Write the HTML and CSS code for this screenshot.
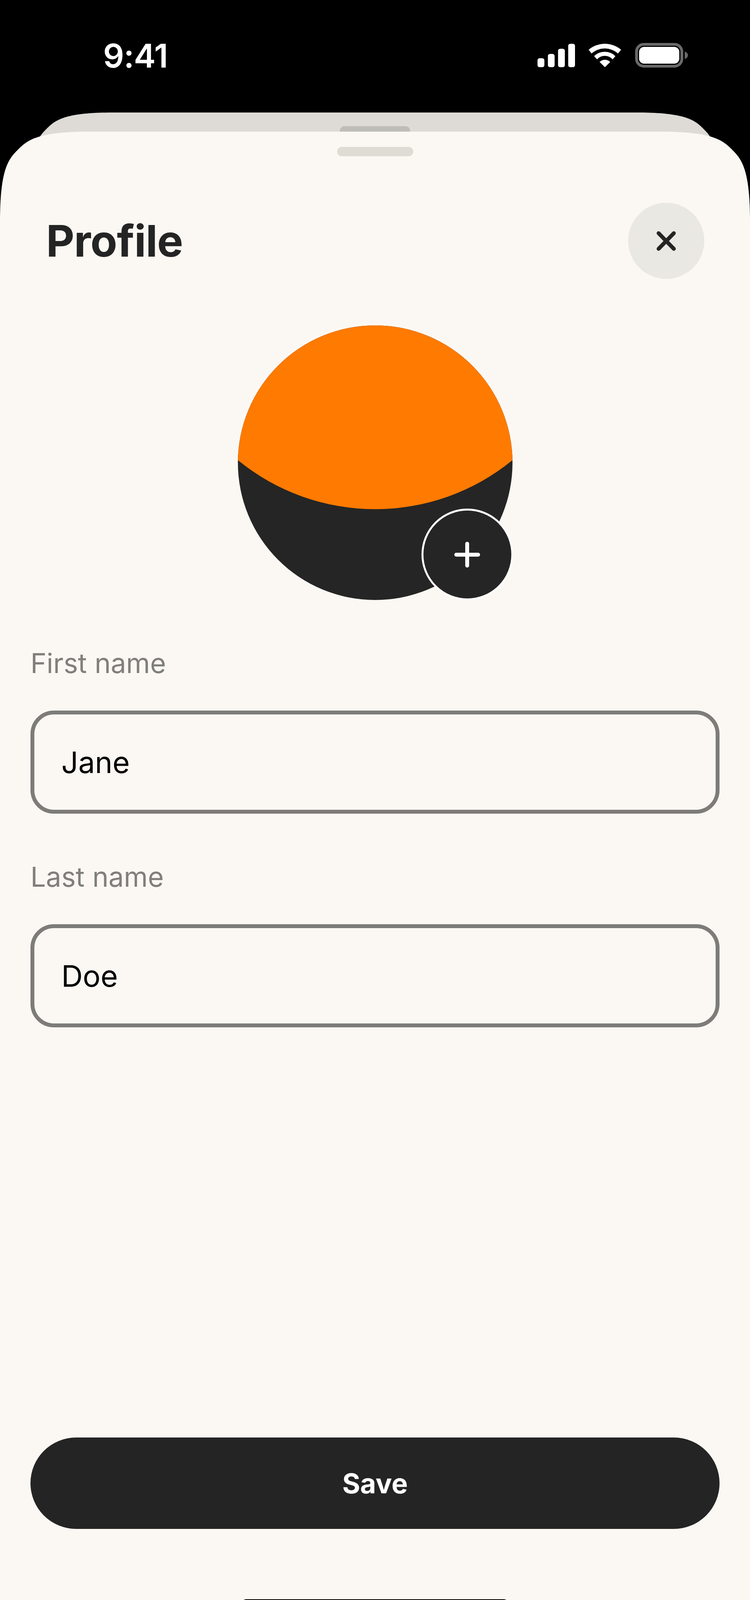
FILE: index.html
```html
<!DOCTYPE html>
<html lang="en">
<head>
<meta charset="utf-8">
<title>Profile</title>
<link rel="stylesheet" href="styles.css">
</head>
<body>
<div class="phone">
  <header class="statusbar">
    <span class="time">9:41</span>
    <div class="status-icons">
      <svg class="signal" viewBox="0 0 96 60" aria-hidden="true">
        <rect x="0" y="37" width="17.6" height="23" rx="5.5"/>
        <rect x="26.6" y="26" width="17.2" height="34" rx="5.5"/>
        <rect x="52.6" y="12.7" width="17.4" height="47.3" rx="5.5"/>
        <rect x="78.6" y="0" width="17.4" height="60" rx="5.5"/>
      </svg>
      <svg class="wifi" viewBox="0 0 249 180" aria-hidden="true">
        <path d="M0 46A191 191 0 0 1 249 46L225 75A152 152 0 0 0 22 75Z"/>
        <path d="M42 95A115 115 0 0 1 205 95L184 120A80 80 0 0 0 64 120Z"/>
        <path d="M84 140A57 57 0 0 1 165 140L125 180Z"/>
      </svg>
      <div class="battery">
        <div class="battery-body"><div class="battery-fill"></div></div>
        <svg class="battery-cap" viewBox="0 0 8 19" aria-hidden="true"><path d="M0 0C5 2 8 5 8 9.500C8 14 5 17 0 19Z"/></svg>
      </div>
    </div>
  </header>

  <div class="back-card"><div class="back-handle"></div></div>

  <main class="sheet">
    <div class="sheet-handle"></div>
    <div class="sheet-header">
      <h1 class="title">Profile</h1>
      <button class="close-btn" aria-label="Close">
        <svg class="close-icon" viewBox="0 0 49 50" aria-hidden="true"><path d="M5 5L44 45M44 5L5 45"/></svg>
      </button>
    </div>

    <div class="avatar">
      <svg class="avatar-art" viewBox="0 0 703 703" aria-hidden="true">
        <circle cx="351.500" cy="351.500" r="351.500" fill="#252525"/>
        <path d="M0.060 345A351.500 351.500 0 0 1 702.940 345A554.800 554.800 0 0 1 0.060 345Z" fill="#ff7a00"/>
      </svg>
      <button class="avatar-add" aria-label="Add photo">
        <svg class="plus-icon" viewBox="0 0 66 66" aria-hidden="true"><path d="M33 5V61M5 33H61"/></svg>
      </button>
    </div>

    <form class="form">
      <div class="field">
        <div class="label">First name</div>
        <div class="input">Jane</div>
      </div>
      <div class="field">
        <div class="label">Last name</div>
        <div class="input">Doe</div>
      </div>
    </form>

    <button class="save-btn">Save</button>
    <div class="home-indicator"></div>
  </main>
</div>
</body>
</html>
```
FILE: styles.css
```css
* { box-sizing: border-box; }
html, body { margin: 0; padding: 0; background: #000; }
body { font-family: "Inter", "Liberation Sans", sans-serif; }
button { border: 0; padding: 0; font: inherit; cursor: pointer; }

.phone {
  width: 1920px;
  height: 4158px;
  display: flex;
  flex-direction: column;
  overflow: hidden;
  background: #000;
}

.statusbar {
  height: 288px;
  flex: none;
  display: flex;
  align-items: flex-start;
  justify-content: space-between;
  padding: 110px 159px 0 264px;
  color: #fff;
}
.time { font-size: 84px; line-height: 66px; font-weight: 600; letter-spacing: -1px; }
.status-icons { display: flex; align-items: flex-start; }
.signal { width: 96px; height: 60px; margin-top: 2px; fill: #fff; display: block; }
.wifi { width: 83px; height: 60px; margin: 2px 0 0 35px; fill: #fff; display: block; }
.battery { display: flex; align-items: center; margin-left: 36px; }
.battery-body {
  width: 123px;
  height: 63px;
  border: 7px solid #6a6a6a;
  border-radius: 22px;
  padding: 3px;
}
.battery-fill { width: 100%; height: 100%; background: #fff; border-radius: 13px; }
.battery-cap { width: 8px; height: 19px; margin-left: 4px; fill: #6a6a6a; display: block; }

.back-card {
  flex: none;
  height: 220px;
  margin: 0 77px -171px;
  padding-top: 35px;
  background: #dedbd6;
  clip-path: path("M0 212C0 87 20 64 42 42C64 20 87 0 212 0L1554 0C1679 0 1702 20 1724 42C1746 64 1766 87 1766 212Z");
}
.back-handle { width: 180px; height: 24px; margin: 0 auto; border-radius: 12px; background: #bfbdb8; }

.sheet {
  position: relative;
  flex: 1;
  display: flex;
  flex-direction: column;
  background: #fbf8f3;
  clip-path: path("M0 230C0 95 22 70 46 46C70 22 95 0 230 0L1690 0C1825 0 1850 22 1874 46C1898 70 1920 95 1920 230L1920 3821L0 3821Z");
}
.sheet-handle {
  flex: none;
  width: 195px;
  height: 24px;
  margin: 39px auto 0;
  border-radius: 12px;
  background: #dfdcd6;
}
.sheet-header {
  flex: none;
  display: flex;
  align-items: center;
  justify-content: space-between;
  margin-top: 119px;
  padding: 0 117px 0 118px;
}
.title { margin: 0; font-size: 112px; line-height: 195px; font-weight: 700; color: #242424; letter-spacing: -1px; }
.close-btn {
  width: 195px;
  height: 195px;
  border-radius: 50%;
  background: #eae8e2;
  display: flex;
  align-items: center;
  justify-content: center;
}
.close-icon { width: 49px; height: 50px; display: block; fill: none; stroke: #242424; stroke-width: 10; stroke-linecap: round; }

.avatar {
  position: relative;
  flex: none;
  width: 703px;
  height: 703px;
  margin: 119px auto 0;
}
.avatar-art { width: 703px; height: 703px; display: block; }
.avatar-add {
  position: absolute;
  right: -2px;
  bottom: -1px;
  width: 235px;
  height: 235px;
  border-radius: 50%;
  background: #252525;
  border: 5px solid #fff;
  display: flex;
  align-items: center;
  justify-content: center;
}
.plus-icon { width: 66px; height: 66px; display: block; fill: none; stroke: #fff; stroke-width: 10; stroke-linecap: round; }

.form {
  flex: none;
  display: flex;
  flex-direction: column;
  gap: 120px;
  margin: 120px 78px 0;
}
.field { display: flex; flex-direction: column; gap: 79px; }
.label { font-size: 70px; line-height: 84px; color: #807f7c; }
.input {
  height: 264px;
  border: 10px solid #7d7c79;
  border-radius: 60px;
  padding: 0 69px;
  display: flex;
  align-items: center;
  font-size: 76px;
  color: #000;
}

.save-btn {
  flex: none;
  height: 234px;
  margin: auto 78px 0;
  border-radius: 117px;
  background: #242424;
  color: #fff;
  font-size: 70px;
  font-weight: 700;
}
.home-indicator {
  flex: none;
  width: 684px;
  height: 25px;
  margin: 180px auto 39px;
  border-radius: 13px;
  background: #000;
}
```
